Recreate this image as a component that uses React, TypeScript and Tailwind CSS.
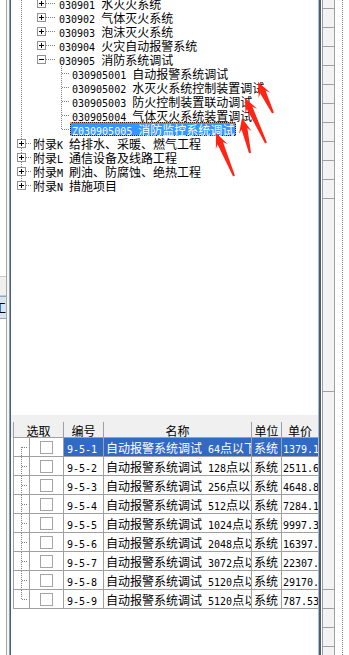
import React from "react";

const ASCII = /^[\x00-\x7f]+$/;

function Txt({ s }: { s: string }) {
  const parts = s.split(/([\x00-\x7f]+)/).filter((p) => p.length > 0);
  return (
    <span className="whitespace-nowrap leading-none">
      {parts.map((p, i) =>
        ASCII.test(p) ? (
          <span key={i} className="font-['DejaVu_Sans_Mono',monospace] text-[10px] whitespace-pre">
            {p}
          </span>
        ) : (
          <span key={i} className="font-['Noto_Sans_CJK_SC',sans-serif] text-[12px]">
            {p}
          </span>
        )
      )}
    </span>
  );
}

function Box({ minus }: { minus?: boolean }) {
  return (
    <svg width="9" height="9" className="block shrink-0">
      <rect x="0.5" y="0.5" width="8" height="8" fill="white" stroke="#919191" />
      <line x1="2" y1="4.5" x2="7" y2="4.5" stroke="black" />
      {!minus && <line x1="4.5" y1="2" x2="4.5" y2="7" stroke="black" />}
    </svg>
  );
}

type TRow = { lvl: number; box?: "+" | "-"; t: string; sel?: boolean };

const treeRows: TRow[] = [
  { lvl: 2, box: "+", t: "030901 水灭火系统" },
  { lvl: 2, box: "+", t: "030902 气体灭火系统" },
  { lvl: 2, box: "+", t: "030903 泡沫灭火系统" },
  { lvl: 2, box: "+", t: "030904 火灾自动报警系统" },
  { lvl: 2, box: "-", t: "030905 消防系统调试" },
  { lvl: 3, t: "030905001 自动报警系统调试" },
  { lvl: 3, t: "030905002 水灭火系统控制装置调试" },
  { lvl: 3, t: "030905003 防火控制装置联动调试" },
  { lvl: 3, t: "030905004 气体灭火系统装置调试" },
  { lvl: 3, sel: true, t: "Z030905005 消防监控系统调试" },
  { lvl: 1, box: "+", t: "附录K 给排水、采暖、燃气工程" },
  { lvl: 1, box: "+", t: "附录L 通信设备及线路工程" },
  { lvl: 1, box: "+", t: "附录M 刷油、防腐蚀、绝热工程" },
  { lvl: 1, box: "+", t: "附录N 措施项目" },
];

const items: [string, string, string][] = [
  ["9-5-1", "自动报警系统调试 64点以下", "1379.16"],
  ["9-5-2", "自动报警系统调试 128点以下", "2511.64"],
  ["9-5-3", "自动报警系统调试 256点以下", "4648.80"],
  ["9-5-4", "自动报警系统调试 512点以下", "7284.14"],
  ["9-5-5", "自动报警系统调试 1024点以下", "9997.36"],
  ["9-5-6", "自动报警系统调试 2048点以下", "16397.33"],
  ["9-5-7", "自动报警系统调试 3072点以下", "22307.57"],
  ["9-5-8", "自动报警系统调试 5120点以下", "29170.64"],
  ["9-5-9", "自动报警系统调试 5120点以上", "787.53"],
];

function arrowPts(tip: number[], tail: number[]) {
  const dx = tail[0] - tip[0];
  const dy = tail[1] - tip[1];
  const L = Math.hypot(dx, dy);
  const ux = dx / L;
  const uy = dy / L;
  const nx = -uy;
  const ny = ux;
  const p = (a: number, b: number) =>
    `${(tip[0] + ux * a + nx * b).toFixed(1)},${(tip[1] + uy * a + ny * b).toFixed(1)}`;
  return [p(0, 0), p(15, 6.5), p(11, 3), p(L, 1), p(L, -1), p(11, -3), p(15, -6.5)].join(" ");
}

const arrows = [
  { tip: [258, 82], tail: [273, 113] },
  { tip: [245, 98], tail: [266, 143] },
  { tip: [242, 118], tail: [250, 153] },
  { tip: [216, 133], tail: [234, 176] },
];

function TreeCellLines({ first, last }: { first: boolean; last: boolean }) {
  return (
    <svg width="15" height="18" className="block">
      <line
        x1="7.5"
        y1={first ? 9 : 0}
        x2="7.5"
        y2={last ? 9 : 18}
        stroke="#808080"
        strokeDasharray="1 1"
        shapeRendering="crispEdges"
      />
      <line x1="8" y1="9.5" x2="14" y2="9.5" stroke="#808080" strokeDasharray="1 1" shapeRendering="crispEdges" />
    </svg>
  );
}

export default function App() {
  const dot = { stroke: "#808080", strokeDasharray: "1 1", shapeRendering: "crispEdges" as const };
  return (
    <div className="relative flex h-[655px] w-[349px] overflow-hidden bg-white text-black">
      {/* left partial panel */}
      <div className="flex h-full w-[7px] flex-col overflow-hidden border-r border-[#aca899]">
        <div className="h-[276px]" />
        <div className="h-[20px] border-y border-[#c9c9c9] bg-[#f0f0f0]" />
        <div className="flex h-[23px] items-center overflow-hidden border-y border-[#8ea6c4] bg-[#d8e4f0]">
          <span className="ml-[-6px] font-['Noto_Sans_CJK_SC',sans-serif] text-[12px] leading-none">工</span>
        </div>
        <div className="flex-1" />
      </div>
      <div className="h-full w-[2px] bg-[#f2f5f8]" />
      <div className="h-full w-[1px] bg-[#8ba0bc]" />
      <div className="h-full w-[1px] bg-[#4e5c72]" />

      {/* main */}
      <div className="flex h-full w-[307px] flex-col">
        {/* tree */}
        <div className="relative h-[415px] overflow-hidden">
          <svg className="absolute inset-0" width="307" height="415">
            <line x1="10.5" y1="0" x2="10.5" y2="186" {...dot} />
            {[143, 157, 171, 185].map((y) => (
              <line key={y} x1="15" y1={y + 0.5} x2="21" y2={y + 0.5} {...dot} />
            ))}
            {[3, 17, 31, 45, 59].map((y) => (
              <line key={y} x1="35" y1={y + 0.5} x2="45" y2={y + 0.5} {...dot} />
            ))}
            <line x1="50.5" y1="66" x2="50.5" y2="130" {...dot} />
            {[73, 87, 101, 115, 129].map((y) => (
              <line key={y} x1="51" y1={y + 0.5} x2="59" y2={y + 0.5} {...dot} />
            ))}
          </svg>
          <div className="relative mt-[-4px] flex flex-col">
            {treeRows.map((r, i) => (
              <div key={i} className="flex h-[14px] items-center whitespace-nowrap">
                {r.lvl === 1 && (
                  <>
                    <span className="ml-[6px]">
                      <Box minus={r.box === "-"} />
                    </span>
                    <span className="ml-[7px]">
                      <Txt s={r.t} />
                    </span>
                  </>
                )}
                {r.lvl === 2 && (
                  <>
                    <span className="ml-[26px]">
                      <Box minus={r.box === "-"} />
                    </span>
                    <span className="ml-[13px]">
                      <Txt s={r.t} />
                    </span>
                  </>
                )}
                {r.lvl === 3 && !r.sel && (
                  <span className="ml-[61px]">
                    <Txt s={r.t} />
                  </span>
                )}
                {r.lvl === 3 && r.sel && (
                  <span className="ml-[59px] flex h-[14px] bg-[#1a1a1a]">
                    <span className="flex h-[14px] items-center border border-dotted border-[#f0a030] bg-[#3399ff] bg-clip-padding pl-[1px] pr-[1px] text-white">
                      <Txt s={r.t} />
                    </span>
                  </span>
                )}
              </div>
            ))}
          </div>
        </div>

        {/* table panel */}
        <div className="flex flex-1 flex-col">
          <div className="h-[7px] bg-[#f0f0f0]" />
          <div className="flex h-[16px] bg-[#f0f0f0]">
            <div className="w-[2px]" />
            <div className="flex w-[305px] border-b border-l border-[#a0a0a0]">
              <div className="flex w-[50px] items-center justify-center border-r border-[#a0a0a0]">
                <Txt s="选取" />
              </div>
              <div className="flex w-[40px] items-center justify-center border-r border-[#a0a0a0]">
                <Txt s="编号" />
              </div>
              <div className="flex w-[148px] items-center justify-center border-r border-[#a0a0a0]">
                <Txt s="名称" />
              </div>
              <div className="flex w-[30px] items-center justify-center border-r border-[#a0a0a0]">
                <Txt s="单位" />
              </div>
              <div className="flex flex-1 items-center justify-center">
                <Txt s="单价" />
              </div>
            </div>
          </div>
          <div className="flex">
            <div className="w-[2px]" />
            <div className="flex w-[305px] flex-col border-l border-[#a0a0a0]">
              {items.map(([code, name, price], i) => {
                const sel = i === 0;
                const cellSel = sel ? "bg-[#316ac5] text-white" : "";
                return (
                  <div key={code} className="flex h-[19px] border-b border-[#a0a0a0]">
                    <div className="w-[16px] border-r border-[#a0a0a0]">
                      <TreeCellLines first={i === 0} last={i === items.length - 1} />
                    </div>
                    <div className="flex w-[34px] items-center justify-center border-r border-[#a0a0a0]">
                      <div className="h-[13px] w-[13px] border border-[#a5a5a5] bg-white" />
                    </div>
                    <div className={`flex w-[40px] items-center overflow-hidden border-r border-[#a0a0a0] pl-[3px] ${cellSel}`}>
                      <Txt s={code} />
                    </div>
                    <div className={`flex w-[148px] items-center overflow-hidden border-r border-[#a0a0a0] pl-[2px] ${cellSel}`}>
                      <Txt s={name} />
                    </div>
                    <div className={`flex w-[30px] items-center overflow-hidden border-r border-[#a0a0a0] pl-[2px] ${cellSel}`}>
                      <Txt s="系统" />
                    </div>
                    <div className={`flex flex-1 items-center overflow-hidden pl-[1px] ${cellSel}`}>
                      <Txt s={price} />
                    </div>
                  </div>
                );
              })}
            </div>
          </div>
          <div className="flex-1" />
        </div>
      </div>

      {/* right border + partial column */}
      <div className="h-full w-[1px] bg-[#a9bbd2]" />
      <div className="h-full w-[2px] bg-[#4e5c72]" />
      <div className="h-full w-[1px] bg-white" />
      <div className="flex h-full w-[13px] flex-col border-x border-[#a0a0a0] bg-[#f3f3f3]">
        <div className="h-[9px] border-b border-[#a0a0a0]" />
        <div className="h-[19px] border-b border-[#a0a0a0]" />
        <div className="h-[19px] border-b border-[#a0a0a0]" />
        <div className="h-[19px] border-b border-[#a0a0a0]" />
        <div className="h-[19px] border-b border-[#a0a0a0]" />
        <div className="h-[19px] border-b border-[#a0a0a0]" />
        <div className="h-[19px] border-b border-[#a0a0a0]" />
        <div className="h-[19px] border-b border-[#a0a0a0]" />
        <div className="h-[19px] border-b border-[#a0a0a0]" />
        <div className="h-[19px] border-b border-[#a0a0a0]" />
        <div className="h-[19px] border-b border-[#a0a0a0]" />
        <div className="h-[193px] border-b border-[#a0a0a0]" />
        <div className="h-[198px] border-b border-[#a0a0a0]" />
        <div className="h-[19px] border-b border-[#a0a0a0]" />
        <div className="h-[19px] border-b border-[#a0a0a0]" />
        <div className="h-[19px] border-b border-[#a0a0a0]" />
        <div className="flex-1" />
      </div>
      <div className="h-full w-[7px]" />
      <div className="h-full w-[1px] border-l border-dotted border-[#808080]" />
      <div className="h-full flex-1" />

      {/* red annotation arrows */}
      <svg className="pointer-events-none absolute inset-0" width="349" height="655">
        {arrows.map((a, i) => (
          <polygon key={i} points={arrowPts(a.tip, a.tail)} fill="#ff2414" />
        ))}
      </svg>
    </div>
  );
}
